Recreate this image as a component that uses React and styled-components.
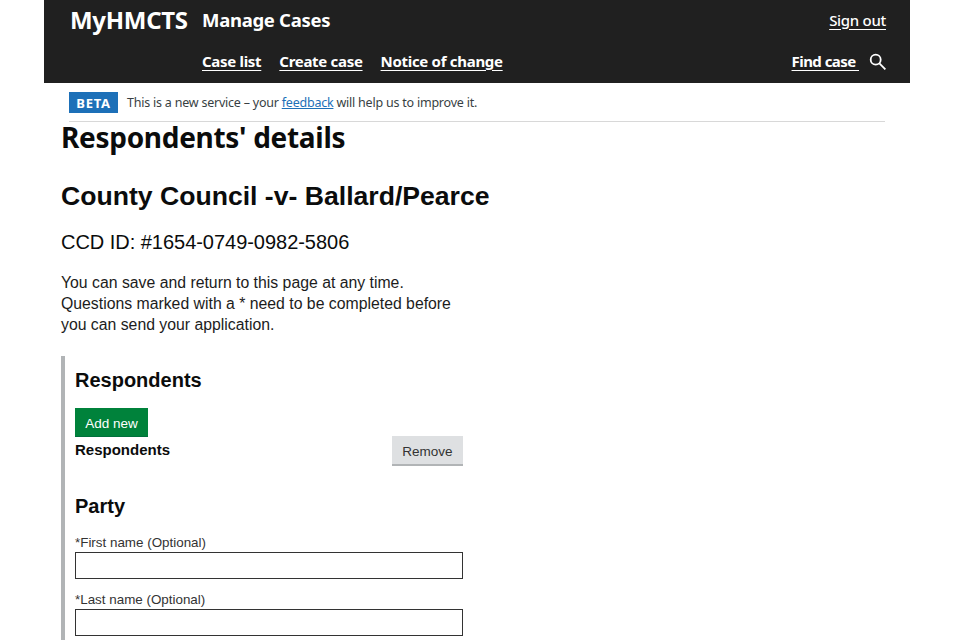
import React from 'react';
import styled, { createGlobalStyle } from 'styled-components';

const GlobalStyle = createGlobalStyle`
  html, body {
    margin: 0;
    padding: 0;
    background: #fff;
    height: 640px;
    overflow: hidden;
    font-family: "Liberation Sans", Arial, sans-serif;
    color: #0b0c0c;
  }
  * { box-sizing: border-box; }
`;

const transport = `"Noto Sans", "Open Sans", Arial, sans-serif`;

const Page = styled.div`
  width: 960px;
  height: 640px;
  overflow: hidden;
`;

const Header = styled.header`
  margin: 0 50px 0 44px;
  height: 83px;
  background: #202020;
  color: #fff;
  padding: 0 24px 0 26px;
  display: grid;
  grid-template-columns: 132px 1fr auto;
  grid-template-rows: 38px 45px;
  font-family: ${transport};
`;

const Logo = styled.div`
  font-size: 24px;
  font-weight: 700;
  letter-spacing: -0.3px;
  align-self: center;
`;

const ServiceName = styled.div`
  font-size: 18.5px;
  font-weight: 700;
  letter-spacing: -0.3px;
  align-self: center;
  margin-top: 1px;
`;

const HeaderLink = styled.a`
  color: #fff;
  font-size: 15px;
  line-height: 20px;
  font-weight: ${(p) => (p.$plain ? 500 : 700)};
  letter-spacing: -0.3px;
  text-decoration: underline;
  text-underline-offset: 3px;
`;

const FindLink = styled(HeaderLink)`
  letter-spacing: -0.55px;
`;

const SignOut = styled.div`
  align-self: center;
  justify-self: end;
  margin-top: 1px;
`;

const Nav = styled.nav`
  grid-column: 2;
  display: flex;
  gap: 18px;
  align-items: flex-start;
  padding-top: 13px;
`;

const FindCase = styled.div`
  display: flex;
  align-items: flex-start;
  gap: 10px;
  padding-top: 13px;
`;

const SearchIcon = styled.svg`
  margin-top: 2px;
`;

const Banner = styled.div`
  margin: 0 75px 0 69px;
  height: 39px;
  padding-top: 9px;
  border-bottom: 1px solid #d8d8d8;
  display: flex;
  align-items: flex-start;
  gap: 9px;
  font-family: ${transport};
  font-size: 12.5px;
  letter-spacing: -0.22px;
  color: #383f43;
`;

const Tag = styled.span`
  background: #1d70b8;
  color: #fff;
  font-weight: 700;
  font-size: 13px;
  letter-spacing: 0.7px;
  width: 49px;
  height: 21px;
  display: flex;
  align-items: center;
  justify-content: center;
`;

const BannerText = styled.span`
  line-height: 21px;
`;

const FeedbackLink = styled.a`
  color: #1d70b8;
  text-decoration: underline;
`;

const Main = styled.main`
  padding-left: 61px;
`;

const Title = styled.h1`
  margin: 0;
  font-family: ${transport};
  font-size: 28px;
  font-weight: 700;
  line-height: 30px;
  letter-spacing: -0.3px;
`;

const CaseTitle = styled.h2`
  margin: 27px 0 0;
  font-size: 26.6px;
  font-weight: 700;
  line-height: 34px;
`;

const CaseId = styled.div`
  margin-top: 17px;
  font-size: 20px;
  line-height: 24px;
  letter-spacing: -0.03px;
`;

const Intro = styled.p`
  margin: 18px 0 0;
  width: 400px;
  font-size: 15.8px;
  line-height: 21px;
  color: #1c1c1c;
`;

const Section = styled.section`
  margin-top: 21px;
  border-left: 4px solid #b1b4b6;
  padding: 12px 0 20px 10px;
  width: 402px;
`;

const SectionHeading = styled.h3`
  margin: 0;
  font-size: 20px;
  font-weight: 700;
  line-height: 24px;
`;

const AddButton = styled.button`
  display: block;
  margin-top: 16px;
  width: 73px;
  height: 29px;
  padding: 2px 0 0;
  border: 0;
  border-bottom: 1px solid #00703c;
  background: #00823b;
  color: #fff;
  font-family: inherit;
  font-size: 13.5px;
`;

const CollectionRow = styled.div`
  display: flex;
  justify-content: space-between;
  align-items: flex-start;
`;

const RowLabel = styled.div`
  font-size: 15px;
  font-weight: 700;
  line-height: 26px;
`;

const RemoveButton = styled.button`
  margin-top: -1px;
  width: 71px;
  height: 30px;
  padding: 2px 0 0;
  border: 0;
  border-bottom: 2px solid #b1b4b6;
  background: #dee0e2;
  color: #333;
  font-family: inherit;
  font-size: 13.5px;
`;

const PartyHeading = styled(SectionHeading)`
  margin-top: 28px;
`;

const Field = styled.div`
  margin-top: ${(p) => p.$gap}px;
`;

const FieldLabel = styled.label`
  display: block;
  font-size: 13.4px;
  line-height: 19px;
  color: #333;
`;

const TextInput = styled.input`
  display: block;
  width: 388px;
  height: 27px;
  border: 1px solid #333;
  border-radius: 0;
  background: #fff;
  padding: 0 4px;
`;

export default function App() {
  return (
    <Page>
      <GlobalStyle />
      <Header>
        <Logo>MyHMCTS</Logo>
        <ServiceName>Manage Cases</ServiceName>
        <SignOut>
          <HeaderLink $plain href="#">Sign out</HeaderLink>
        </SignOut>
        <Nav>
          <HeaderLink href="#">Case list</HeaderLink>
          <HeaderLink href="#">Create case</HeaderLink>
          <HeaderLink href="#">Notice of change</HeaderLink>
        </Nav>
        <FindCase>
          <FindLink href="#">Find case&nbsp;</FindLink>
          <SearchIcon width="17" height="17" viewBox="0 0 17 17" fill="none" stroke="#fff" strokeWidth="1.8">
            <circle cx="6.7" cy="6.7" r="5" />
            <path d="M10.4 10.4l6 6" />
          </SearchIcon>
        </FindCase>
      </Header>
      <Banner>
        <Tag>BETA</Tag>
        <BannerText>
          This is a new service – your <FeedbackLink href="#">feedback</FeedbackLink> will help us to improve it.
        </BannerText>
      </Banner>
      <Main>
        <Title>Respondents' details</Title>
        <CaseTitle>County Council -v- Ballard/Pearce</CaseTitle>
        <CaseId>CCD ID: #1654-0749-0982-5806</CaseId>
        <Intro>
          You can save and return to this page at any time. Questions marked with a * need to be completed before you can send your application.
        </Intro>
        <Section>
          <SectionHeading>Respondents</SectionHeading>
          <AddButton>Add new</AddButton>
          <CollectionRow>
            <RowLabel>Respondents</RowLabel>
            <RemoveButton>Remove</RemoveButton>
          </CollectionRow>
          <PartyHeading>Party</PartyHeading>
          <Field $gap={15}>
            <FieldLabel>*First name (Optional)</FieldLabel>
            <TextInput />
          </Field>
          <Field $gap={11}>
            <FieldLabel>*Last name (Optional)</FieldLabel>
            <TextInput />
          </Field>
        </Section>
      </Main>
    </Page>
  );
}
